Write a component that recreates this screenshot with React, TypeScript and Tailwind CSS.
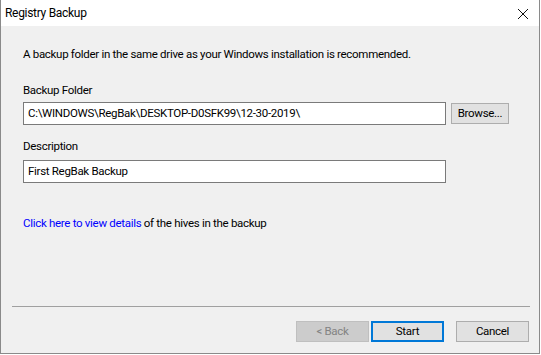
import React from "react";

const font = { fontFamily: 'Roboto, "Noto Sans", sans-serif' };

export default function App() {
  return (
    <div
      className="w-[541px] h-[355px] bg-white text-[11.5px] tracking-[-0.3px] text-black"
      style={font}
    >
      <div className="flex h-[354px] w-[540px] flex-col border border-[#8a8a8a] border-t-0">
        {/* title bar */}
        <div className="flex h-[26px] items-center justify-between bg-white pl-[4px] pr-[10px]">
          <span className="text-[12px] leading-none">Registry Backup</span>
          <svg width="12" height="12" viewBox="0 0 12 12" className="mt-[2px]">
            <path d="M1 1 L11 11 M11 1 L1 11" stroke="#111" strokeWidth="1" />
          </svg>
        </div>

        {/* body */}
        <div className="flex flex-1 flex-col bg-[#f0f0f0]">
          <div className="flex flex-col px-[22px] pt-[19px]">
            <p className="h-[18px] leading-[18px]">
              A backup folder in the same drive as your Windows installation is recommended.
            </p>

            <p className="mt-[18px] h-[18px] leading-[18px]">Backup Folder</p>
            <div className="mt-[3px] flex items-center gap-[5px]">
              <div className="flex h-[23px] w-[423px] items-center border border-[#7a7a7a] bg-white px-[4px]">
                C:\WINDOWS\RegBak\DESKTOP-D0SFK99\12-30-2019\
              </div>
              <button className="h-[21px] w-[58px] border border-[#adadad] bg-[#e1e1e1] leading-none">
                Browse...
              </button>
            </div>

            <p className="mt-[12px] h-[18px] leading-[18px]">Description</p>
            <div className="mt-[5px] flex h-[23px] w-[423px] items-center border border-[#7a7a7a] bg-white px-[4px]">
              First RegBak Backup
            </div>

            <p className="mt-[31px] h-[18px] leading-[18px]">
              <span className="text-[#0000ff]">Click here to view details</span> of the hives in the
              backup
            </p>
          </div>

          <div className="ml-[11px] mr-[9px] mt-[74px] h-[1px] bg-[#a0a0a0]" />

          <div className="mt-[14px] flex justify-end pr-[10px]">
            <button className="h-[21px] w-[73px] border border-[#bfbfbf] bg-[#cccccc] leading-none text-[#838383]">
              &lt; Back
            </button>
            <button className="ml-[2px] h-[21px] w-[73px] border-2 border-[#0078d7] bg-[#e1e1e1] leading-none">
              Start
            </button>
            <button className="ml-[12px] h-[21px] w-[73px] border border-[#adadad] bg-[#e1e1e1] leading-none">
              Cancel
            </button>
          </div>
        </div>
      </div>
    </div>
  );
}
